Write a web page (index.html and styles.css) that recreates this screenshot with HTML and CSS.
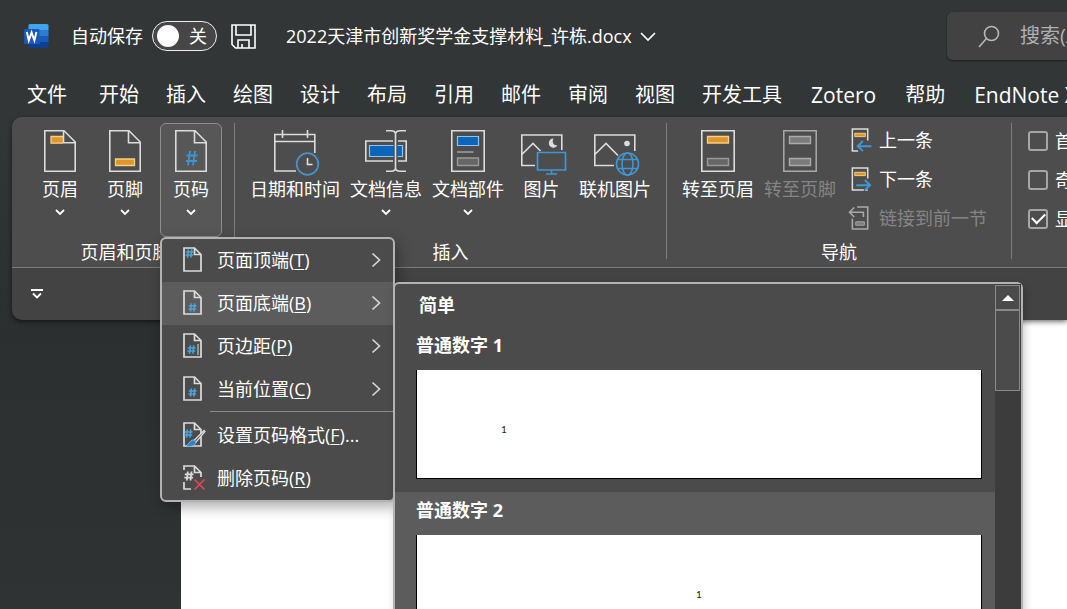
FILE: index.html
```html
<!DOCTYPE html>
<html lang="zh-CN">
<head>
<meta charset="utf-8">
<meta name="viewport" content="width=device-width, initial-scale=1">
<title>2022天津市创新奖学金支撑材料_许栋.docx - Word</title>
<link rel="stylesheet" href="styles.css">
</head>
<body>
<svg class="defs" aria-hidden="true">
  <symbol id="chev-down" viewBox="0 0 10 6"><path d="M1 1l4 4 4-4" fill="none" stroke="currentColor" stroke-width="1.8"/></symbol>
  <symbol id="chev-right" viewBox="0 0 10 16"><path d="M1.5 1.5l7 6.5-7 6.5" fill="none" stroke="#d6d6d6" stroke-width="1.7"/></symbol>
  <symbol id="page" viewBox="0 0 19 25"><path d="M1 1h10.500l6.500 6.500V24H1zM11.500 1v6.500H18" fill="none" stroke="#dcdcdc" stroke-width="1.7"/></symbol>
  <symbol id="hash" viewBox="0 0 10 10"><path d="M3.800.5L2.800 9.500M7.500.5L6.500 9.500M.8 3.300h8.700M.4 6.700h8.700" fill="none" stroke="currentColor" stroke-width="1.8"/></symbol>
</svg>

<div class="app">
  <header class="titlebar">
    <svg class="logo" width="25" height="24" viewBox="0 0 25 24" aria-label="Word">
      <path d="M6 0h17a1.500 1.500 0 0 1 1.500 1.500V6h-20V1.500A1.500 1.500 0 0 1 6 0z" fill="#41a5ee"/>
      <path d="M4.500 6h20v6h-20z" fill="#2b7cd3"/>
      <path d="M4.500 12h20v6h-20z" fill="#185abd"/>
      <path d="M4.500 18h20v4.500A1.500 1.500 0 0 1 23 24H6a1.500 1.500 0 0 1-1.500-1.500z" fill="#103f91"/>
      <rect x="0" y="5" width="15.500" height="15" rx="1.300" fill="#1b57b5"/>
      <path d="M2.800 8l2 8.500L7.600 8.500l2.800 8L12.400 8" fill="none" stroke="#fff" stroke-width="2"/>
    </svg>
    <span class="autosave" id="autosave">自动保存</span>
    <button class="switch" role="switch" aria-checked="false" aria-labelledby="autosave"><span class="knob"></span><span>关</span></button>
    <button class="save" aria-label="保存">
      <svg width="25" height="25" viewBox="0 0 25 25" fill="none" stroke="#fff" stroke-width="1.600"><path d="M1 1h23v23H4.500L1 20.500zM5 1v10h15V1M7 24v-8h11v8M11 24v-4"/></svg>
    </button>
    <button class="docname">2022天津市创新奖学金支撑材料_许栋.docx
      <svg width="16" height="9" viewBox="0 0 16 9" fill="none" stroke="#fff" stroke-width="1.600"><path d="M1 1l7 7 7-7"/></svg>
    </button>
    <label class="search">
      <svg width="22" height="23" viewBox="0 0 22 23" fill="none" stroke="#b8b8b8" stroke-width="1.600"><circle cx="13.500" cy="8.500" r="7"/><path d="M8.500 13.500L1 22"/></svg>
      <input type="text" placeholder="搜索(Alt+Q)" aria-label="搜索">
    </label>
  </header>

  <nav class="tabs">
    <button class="file">文件</button><button>开始</button><button>插入</button><button>绘图</button><button>设计</button><button>布局</button><button>引用</button><button>邮件</button><button>审阅</button><button>视图</button><button>开发工具</button><button class="latin">Zotero</button><button>帮助</button><button class="latin">EndNote X9</button>
  </nav>

  <section class="ribbon">
    <div class="groups">
      <div class="group first">
        <div class="tools">
          <button class="tool narrow">
            <svg width="32" height="42" viewBox="0 0 32 42" fill="none"><path d="M.8.8H20L31.200 12v29.200H.8z" stroke="#dcdcdc" stroke-width="1.600"/><path d="M19 13.200H7V6.500h12" fill="#e0952a" stroke="#f6cf85" stroke-width="1.300"/><path d="M19.500.8v12h11.700" stroke="#dcdcdc" stroke-width="1.600"/></svg>
            <span>页眉</span><svg class="chev"><use href="#chev-down"/></svg>
          </button>
          <button class="tool narrow">
            <svg width="32" height="42" viewBox="0 0 32 42" fill="none"><path d="M.8.8H20L31.200 12v29.200H.8zM19.500.8v12h11.700" stroke="#dcdcdc" stroke-width="1.600"/><path d="M6.500 29h19v6.500h-19z" fill="#e0952a" stroke="#f6cf85" stroke-width="1.300"/></svg>
            <span>页脚</span><svg class="chev"><use href="#chev-down"/></svg>
          </button>
          <div class="dropdown">
            <button class="tool narrow open" aria-expanded="true">
              <svg width="32" height="42" viewBox="0 0 32 42" fill="none"><path d="M.8.8H20L31.200 12v29.200H.8zM19.500.8v12h11.700" stroke="#dcdcdc" stroke-width="1.600"/><path d="M15 21l-2 14.500M20 21l-2 14.500M11.500 25.500h11M11 31h11" stroke="#3d96d2" stroke-width="1.800"/></svg>
              <span>页码</span><svg class="chev"><use href="#chev-down"/></svg>
            </button>
            <ul class="menu">
              <li><button><svg class="mi" viewBox="0 0 22 25"><use href="#page" width="19" height="25"/><rect x="2" y="2" width="8" height="9" fill="#4b4b4b"/><use href="#hash" x="2" y="2" width="9" height="9" class="blue"/></svg><span>页面顶端(<u>T</u>)</span><svg class="arrow"><use href="#chev-right"/></svg></button></li>
              <li class="active"><button><svg class="mi" viewBox="0 0 22 25"><use href="#page" width="19" height="25"/><use href="#hash" x="5" y="13" width="9" height="9" class="blue"/></svg><span>页面底端(<u>B</u>)</span><svg class="arrow"><use href="#chev-right"/></svg></button>
                <div class="flyout">
                  <div class="gallery">
                    <h2>简单</h2>
                    <button class="sample"><span>普通数字 1</span><span class="sheet">1</span></button>
                    <button class="sample hover"><span>普通数字 2</span><span class="sheet middle">1</span></button>
                  </div>
                  <div class="scroll"><button class="up" aria-label="向上滚动"><svg width="12" height="6" viewBox="0 0 12 6"><path d="M6 0l6 6H0z" fill="#fff"/></svg></button><div class="thumb"></div></div>
                </div>
              </li>
              <li><button><svg class="mi" viewBox="0 0 22 25"><use href="#page" width="19" height="25"/><use href="#hash" x="4" y="12" width="9" height="9" class="blue"/><path d="M15 11v11" stroke="#bbb" stroke-width="1.300"/></svg><span>页边距(<u>P</u>)</span><svg class="arrow"><use href="#chev-right"/></svg></button></li>
              <li><button><svg class="mi" viewBox="0 0 22 25"><use href="#page" width="19" height="25"/><use href="#hash" x="5" y="12" width="9" height="9" class="blue"/></svg><span>当前位置(<u>C</u>)</span><svg class="arrow"><use href="#chev-right"/></svg></button></li>
              <li class="rule"></li>
              <li><button><svg class="mi" viewBox="0 0 22 25"><use href="#page" width="19" height="25"/><use href="#hash" x="1" y="7" width="9" height="9" class="blue"/><path d="M21 8.500L11 18.500l1.800 1.800L22 9.500z" fill="#4b4b4b" stroke="#dcdcdc" stroke-width="1.300"/><path d="M9.800 18c2.500 0 3.500 1 3 3-1 2.800-5 4-11 3.500 4-1 4.500-6 8-6.500z" fill="#2b83cc" stroke="#8cc4ee" stroke-width=".8"/></svg><span>设置页码格式(<u>F</u>)...</span></button></li>
              <li><button><svg class="mi" viewBox="0 0 22 25" fill="none"><path d="M1 5V1h10.500L18 7.500V12M11.500 1v6.500H18M1 17v7h7" stroke="#dcdcdc" stroke-width="1.700"/><use href="#hash" x="1" y="6" width="10" height="10" color="#dcdcdc"/><path d="M11.500 14.500l10 10M21.500 14.500l-10 10" stroke="#e0495a" stroke-width="1.600"/></svg><span>删除页码(<u>R</u>)</span></button></li>
            </ul>
          </div>
        </div>
        <div class="caption">页眉和页脚</div>
      </div>

      <div class="group">
        <div class="tools">
          <button class="tool">
            <svg width="42" height="42" viewBox="0 0 42 42" fill="none"><path d="M22 41H.8V4.500h40V23M.8 11.500h40M8.500 0v8M33.500 0v8" stroke="#dcdcdc" stroke-width="1.600"/><circle cx="33.500" cy="34" r="10.800" stroke="#4593cd" stroke-width="1.700"/><path d="M33.500 28v6.500h5" stroke="#e6e6e6" stroke-width="1.500"/></svg>
            <span>日期和时间</span>
          </button>
          <button class="tool">
            <svg width="42" height="42" viewBox="0 0 42 42" fill="none"><path d="M28 11H.8v20H28M33 11h8.200v20H33" stroke="#dcdcdc" stroke-width="1.600"/><path d="M4.500 15.500h33v11h-33z" fill="#0b66bb" stroke="#8dc2ec" stroke-width="1.200"/><path d="M30.500 3v36" stroke="#4d4d4d" stroke-width="4"/><path d="M21 .8h5q4.500 0 4.500 3.500V38q0 3.200-4.500 3.200h-5M41 .8h-5.500q-5 0-5 3.500V38q0 3.200 5 3.200H41" stroke="#dcdcdc" stroke-width="1.600"/></svg>
            <span>文档信息</span><svg class="chev"><use href="#chev-down"/></svg>
          </button>
          <button class="tool">
            <svg width="34" height="42" viewBox="0 0 34 42" fill="none"><path d="M.8.8h32.400v40.400H.8z" stroke="#dcdcdc" stroke-width="1.600"/><path d="M6.500 6.500h21v9h-21z" fill="#0b66bb" stroke="#8dc2ec" stroke-width="1.200"/><path d="M6 22h16.500" stroke="#a8a8a8" stroke-width="1.400"/><path d="M6.500 28h21v7.500h-21z" fill="#666" stroke="#999" stroke-width="1.400"/></svg>
            <span>文档部件</span><svg class="chev"><use href="#chev-down"/></svg>
          </button>
          <button class="tool mid">
            <svg width="42" height="42" viewBox="0 0 42 42" fill="none"><path d="M14 35.500H.8V5h40v15M.8 24.500L12 13.500l7.500 7.500" stroke="#dcdcdc" stroke-width="1.600"/><path d="M32.500 8.500a4.600 4.600 0 1 0 4 6.800c-4 .5-6-3.500-4-6.800z" fill="#dcdcdc"/><path d="M16.500 22.500h28v17.500h-28zM30.500 40v4M25 44h11" stroke="#3f96d4" stroke-width="1.700"/></svg>
            <span>图片</span>
          </button>
          <button class="tool">
            <svg width="42" height="42" viewBox="0 0 42 42" fill="none"><path d="M20 35.500H.8V5h40v16M.8 24.500L12 13.500 24 25.500" stroke="#dcdcdc" stroke-width="1.600"/><circle cx="33" cy="13.500" r="2.800" fill="#dcdcdc"/><g stroke="#3f96d4" stroke-width="1.600"><circle cx="33.500" cy="34" r="11"/><ellipse cx="33.500" cy="34" rx="5.500" ry="11"/><path d="M24 29.500h19M24 38.500h19"/></g></svg>
            <span>联机图片</span>
          </button>
        </div>
        <div class="caption">插入</div>
      </div>

      <div class="group">
        <div class="tools">
          <button class="tool">
            <svg width="34" height="42" viewBox="0 0 34 42" fill="none"><path d="M.8.8h32.400v40.400H.8z" stroke="#dcdcdc" stroke-width="1.600"/><path d="M6.500 6.500h21v6.500h-21z" fill="#e0952a" stroke="#f6cf85" stroke-width="1.300"/><path d="M6.500 28.500h21v7h-21z" fill="#666" stroke="#999" stroke-width="1.400"/></svg>
            <span>转至页眉</span>
          </button>
          <button class="tool" disabled>
            <svg width="34" height="42" viewBox="0 0 34 42" fill="none"><path d="M.8.8h32.400v40.400H.8z" stroke="#aaa" stroke-width="1.500"/><path d="M6.500 6.500h21v7h-21zM6.500 28.500h21v7h-21z" fill="#7b7b7b" stroke="#aaa" stroke-width="1.400"/></svg>
            <span>转至页脚</span>
          </button>
          <div class="stack">
            <button><svg class="si" viewBox="0 0 24 25" fill="none"><path d="M9 24H3V1h16v12" stroke="#dcdcdc" stroke-width="1.600"/><path d="M5.500 5.500h11v3.500h-11z" fill="#e0952a" stroke="#f6cf85"/><path d="M23 19H8.500M14 13.500L8.500 19l5.500 5" stroke="#3f96d4" stroke-width="2"/></svg>上一条</button>
            <button><svg class="si" viewBox="0 0 24 25" fill="none"><path d="M15 24H3V1h16v11M19 24h-3" stroke="#dcdcdc" stroke-width="1.600"/><path d="M5.500 5.500h11v3.500h-11z" fill="#e0952a" stroke="#f6cf85"/><path d="M7 19h14.500M16 13.500l5.500 5.500-5.500 5" stroke="#3f96d4" stroke-width="2"/></svg>下一条</button>
            <button disabled><svg class="si" viewBox="0 0 24 25" fill="none"><path d="M8 1h11v23H3V13M0 6.500h14.500v5M5 1.500l-5 5 5 5" stroke="#aaa" stroke-width="1.600"/><path d="M6.500 16.500h9v3.500h-9z" fill="#7b7b7b" stroke="#aaa"/></svg>链接到前一节</button>
          </div>
        </div>
        <div class="caption">导航</div>
      </div>

      <div class="group options">
        <label><input type="checkbox">首页不同</label>
        <label><input type="checkbox">奇偶页不同</label>
        <label><input type="checkbox" checked>显示文档文字</label>
      </div>
    </div>
    <div class="quickbar">
      <button aria-label="自定义快速访问工具栏"><svg width="12" height="10" viewBox="0 0 12 10" fill="none" stroke="#fff" stroke-width="1.800"><path d="M0 1h12M2 4.500l4 4 4-4"/></svg></button>
    </div>
  </section>

  <main class="document"></main>
</div>
</body>
</html>
```
FILE: styles.css
```css
* { box-sizing: border-box; }

body {
  margin: 0;
  color: #fff;
  font: 18px/24px "Open Sans", "Noto Sans CJK SC", sans-serif;
}

button {
  margin: 0;
  padding: 0;
  border: 0;
  background: none;
  color: inherit;
  font: inherit;
  white-space: nowrap;
}

svg { flex: none; overflow: visible; }
.defs { display: none; }

.app {
  display: flex;
  flex-direction: column;
  height: 100vh;
  overflow: hidden;
  background: linear-gradient(#333637 0, #333637 120px, #2b2f30 330px, #303334 100%);
}

/* Title bar */
.titlebar {
  display: flex;
  flex: none;
  align-items: center;
  height: 72px;
  padding-left: 24px;
}
.autosave { margin: 0 9px 0 22px; white-space: nowrap; }
.switch {
  display: flex;
  align-items: center;
  justify-content: space-between;
  width: 65px;
  height: 30px;
  padding: 0 9px 0 4px;
  border: 1px solid #eee;
  border-radius: 15px;
  background: #464646;
}
.knob { width: 22px; height: 22px; border-radius: 50%; background: #fff; }
.save { display: flex; margin: 0 30px 0 14px; }
.docname { display: flex; align-items: center; gap: 8px; }
.search {
  display: flex;
  align-items: center;
  gap: 20px;
  width: 120px;
  height: 48px;
  margin-left: auto;
  padding-left: 31px;
  border-radius: 6px 0 0 6px;
  background: #434242;
  box-shadow: 0 1px 2px #1c1c1c;
  overflow: hidden;
}
.search input {
  flex: none;
  width: 140px;
  padding: 0;
  border: 0;
  outline: 0;
  background: none;
  color: #fff;
  font: inherit;
  font-size: 20px;
}
.search input::placeholder { color: #b0b0b0; opacity: 1; }

/* Tabs */
.tabs {
  display: flex;
  flex: none;
  gap: 27px;
  height: 45px;
  padding-left: 27px;
  font-size: 20px;
}
.file { margin-right: 5px; }
.latin { padding: 0 2px; font-size: 21px; }

/* Ribbon */
.ribbon {
  position: relative;
  z-index: 1;
  flex: none;
  margin-left: 12px;
  border-radius: 10px 0 0 10px;
  background: #434343;
  box-shadow: 0 2px 5px #0008;
}
.groups {
  display: flex;
  height: 151px;
  padding: 6px 0 8px;
  border-bottom: 1px solid #7a7a7a;
  border-radius: 10px 0 0 0;
  background: #4d4d4d;
}
.group {
  display: flex;
  flex: none;
  flex-direction: column;
  justify-content: space-between;
  padding: 0 10px;
  border-right: 1px solid #7d7d7d;
}
.first { padding: 0 12px 0 17px; }
.first .tools { gap: 3px; }
.first .dropdown { margin-left: 1px; }
.tools { display: flex; }
.tool {
  display: flex;
  flex-direction: column;
  align-items: center;
  height: 114px;
  padding: 6px 4px;
  border: 1px solid transparent;
  border-radius: 6px;
}
.tool span { margin-top: 5px; }
.narrow { width: 62px; }
.mid { width: 65px; }
.open { border-color: #8d8d8d; background: #575757; }
.chev { width: 10px; height: 6px; margin-top: 8px; }
button:disabled { color: #858585; }
.caption { margin-bottom: -4px; line-height: 22px; text-align: center; }

.stack {
  display: flex;
  flex-direction: column;
  align-items: flex-start;
  gap: 15px;
  padding: 5px 14px 0 8px;
}
.stack button { display: flex; align-items: center; gap: 6px; }
.si { width: 24px; height: 24px; }

.options {
  justify-content: flex-start;
  gap: 15px;
  padding: 6px 10px 0 16px;
  border-right: 0;
}
.options label { display: flex; align-items: center; gap: 7px; white-space: nowrap; }
.options input {
  display: grid;
  place-items: center;
  appearance: none;
  width: 20px;
  height: 20px;
  margin: 0;
  border: 2px solid #a6a6a6;
  border-radius: 3px;
}
.options input:checked::before {
  content: "";
  width: 11px;
  height: 6px;
  border: solid #fff;
  border-width: 0 0 2px 2px;
  transform: translateY(-2px) rotate(-45deg);
}

.quickbar { display: flex; align-items: center; height: 52px; padding-left: 19px; }
.quickbar button { display: flex; }

/* Page number menu */
.dropdown { position: relative; }
.menu {
  position: absolute;
  top: 114px;
  left: 0;
  z-index: 2;
  width: 235px;
  margin: 0;
  padding: 0;
  border: 2px solid #b3b3b3;
  border-radius: 6px;
  background: #4b4b4b;
  box-shadow: 3px 5px 14px #0005;
  list-style: none;
}
.menu li { position: relative; }
.menu li > button {
  display: flex;
  align-items: center;
  width: 100%;
  height: 43px;
  padding: 0 12px 2px 21px;
}
.menu li > button span { margin-left: 12px; }
.menu u { text-underline-offset: 2px; text-decoration-thickness: 1px; }
.mi { width: 22px; height: 25px; }
.blue { color: #4aa3df; }
.arrow { width: 10px; height: 16px; margin-left: auto; }
.active { background: #5c5c5c; }
.menu .rule { height: 3px; margin-left: 48px; border-top: 1px solid #8a8a8a; }

/* Gallery of page number samples */
.flyout {
  position: absolute;
  top: 0;
  left: 231px;
  display: flex;
  width: 630px;
  border: 2px solid #b3b3b3;
  border-radius: 6px;
  background: #4b4b4b;
  box-shadow: 2px 3px 8px #0003;
}
.gallery { flex: 1; }
.gallery h2 {
  margin: 0;
  padding-left: 24px;
  font-size: 18px;
  line-height: 43px;
}
.menu .sample {
  display: flex;
  flex-direction: column;
  width: 100%;
  padding: 6px 13px 13px 21px;
  font-weight: 700;
  text-align: left;
}
.hover { background: #5c5c5c; }
.sheet {
  align-self: stretch;
  height: 109px;
  margin-top: 13px;
  padding: 47px 84px 0;
  border: solid #000;
  border-width: 0 1px 1px;
  background: #fff;
  color: #222;
  font-family: Lato, sans-serif;
  font-size: 10px;
  font-weight: 400;
  line-height: 24px;
}
.middle { text-align: center; }
.scroll { width: 26px; padding: 1px 1px 0 0; background: #3c3c3c; }
.up {
  display: grid;
  place-items: center;
  width: 25px;
  height: 25px;
  border: 1px solid #8a8a8a;
  background: #4b4b4b;
}
.thumb { height: 81px; border: 1px solid #8a8a8a; background: #4b4b4b; }

.document { flex: 1; margin-left: 181px; background: #fff; }
```
